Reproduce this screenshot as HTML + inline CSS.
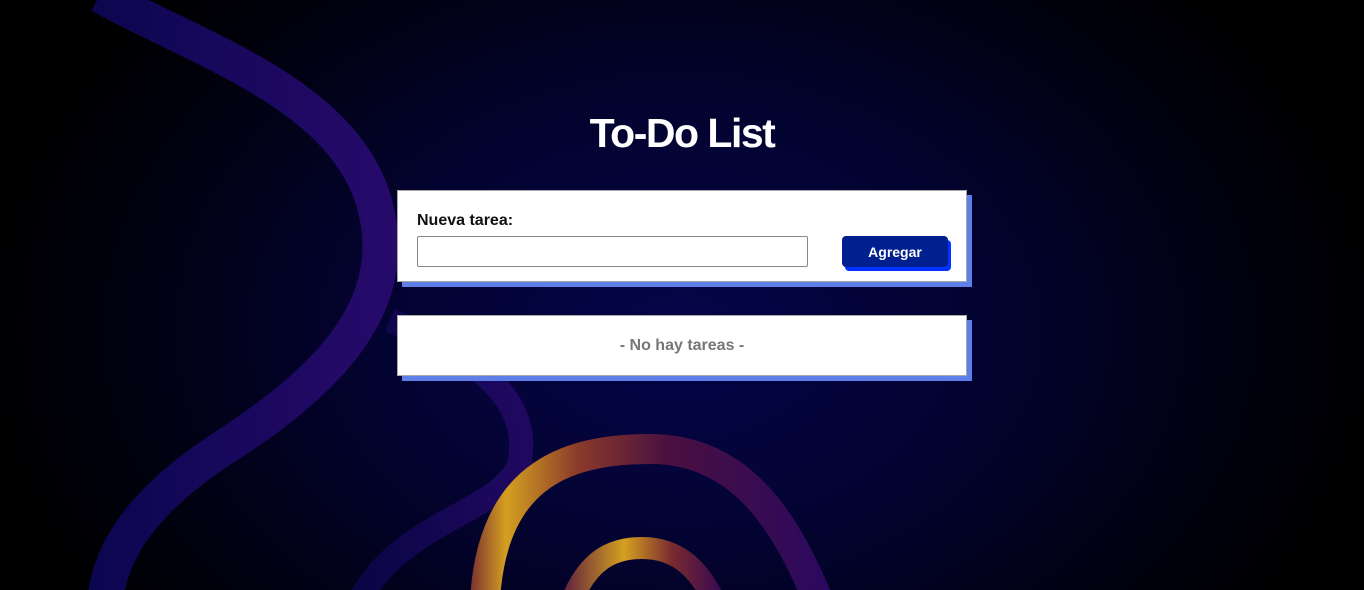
<!DOCTYPE html>
<html><head><meta charset="utf-8"><style>
html,body{margin:0;padding:0;width:1364px;height:590px;overflow:hidden;font-family:"Liberation Sans",sans-serif}
body{background:radial-gradient(ellipse 700px 500px at 680px 330px,#05054a 0%,#030330 45%,#010114 75%,#000 100%);position:relative}
svg.bg{position:absolute;left:0;top:0}
h1{position:absolute;left:0;width:1364px;top:110px;margin:0;text-align:center;color:#fff;font-size:41px;font-weight:bold;letter-spacing:-1.5px}
.card{position:absolute;left:397px;width:568px;background:#fff;border:1px solid #a8a8a8;box-shadow:5px 5px 0 #5f7fe8}
.c1{top:190px;height:90px}
.c2{top:315px;height:59px}
.lbl{position:absolute;left:19px;top:21px;font-size:16px;font-weight:bold;color:#111}
.inp{position:absolute;left:19px;top:45px;width:389px;height:29px;border:1px solid #888;border-radius:2px}
.btn{position:absolute;left:444px;top:45px;width:106px;height:31px;background:#00208f;border-radius:4px;box-shadow:3px 4px 0 #0033ff;color:#fff;font-weight:bold;font-size:14px;text-align:center;line-height:33px}
.empty{text-align:center;line-height:59px;color:#777;font-size:16px;font-weight:bold}
</style></head><body>
<svg class="bg" width="1364" height="590">
<defs>
<linearGradient id="g1" x1="0" x2="1"><stop offset="0" stop-color="#0c0650"/><stop offset="1" stop-color="#260a6a"/></linearGradient>
<linearGradient id="g2" gradientUnits="userSpaceOnUse" x1="470" x2="830"><stop offset="0" stop-color="#7a3030"/><stop offset="0.1" stop-color="#d4a020"/><stop offset="0.3" stop-color="#8a3a2a"/><stop offset="0.55" stop-color="#4a1040"/><stop offset="1" stop-color="#2a0860"/></linearGradient>
<linearGradient id="g3" gradientUnits="userSpaceOnUse" x1="560" x2="720"><stop offset="0" stop-color="#5a1a40"/><stop offset="0.4" stop-color="#d4a020"/><stop offset="0.7" stop-color="#7a2a30"/><stop offset="1" stop-color="#3a0a50"/></linearGradient>
</defs>
<path d="M100,-5 C200,50 330,90 370,190 C410,300 330,380 220,450 C130,510 110,560 105,600" fill="none" stroke="url(#g1)" stroke-width="36"/>
<path d="M390,320 C480,360 530,400 520,460 C510,510 400,520 360,600" fill="none" stroke="url(#g1)" stroke-width="24" opacity="0.8"/>
<path d="M485,600 C492,480 560,449 650,449 C740,449 785,520 818,600" fill="none" stroke="url(#g2)" stroke-width="30"/>
<path d="M572,600 C588,562 610,548 642,548 C680,548 700,572 714,600" fill="none" stroke="url(#g3)" stroke-width="22"/>
</svg>
<h1>To-Do List</h1>
<div class="card c1"><div class="lbl">Nueva tarea:</div><div class="inp"></div><div class="btn">Agregar</div></div>
<div class="card c2"><div class="empty">- No hay tareas -</div></div>
</body></html>
